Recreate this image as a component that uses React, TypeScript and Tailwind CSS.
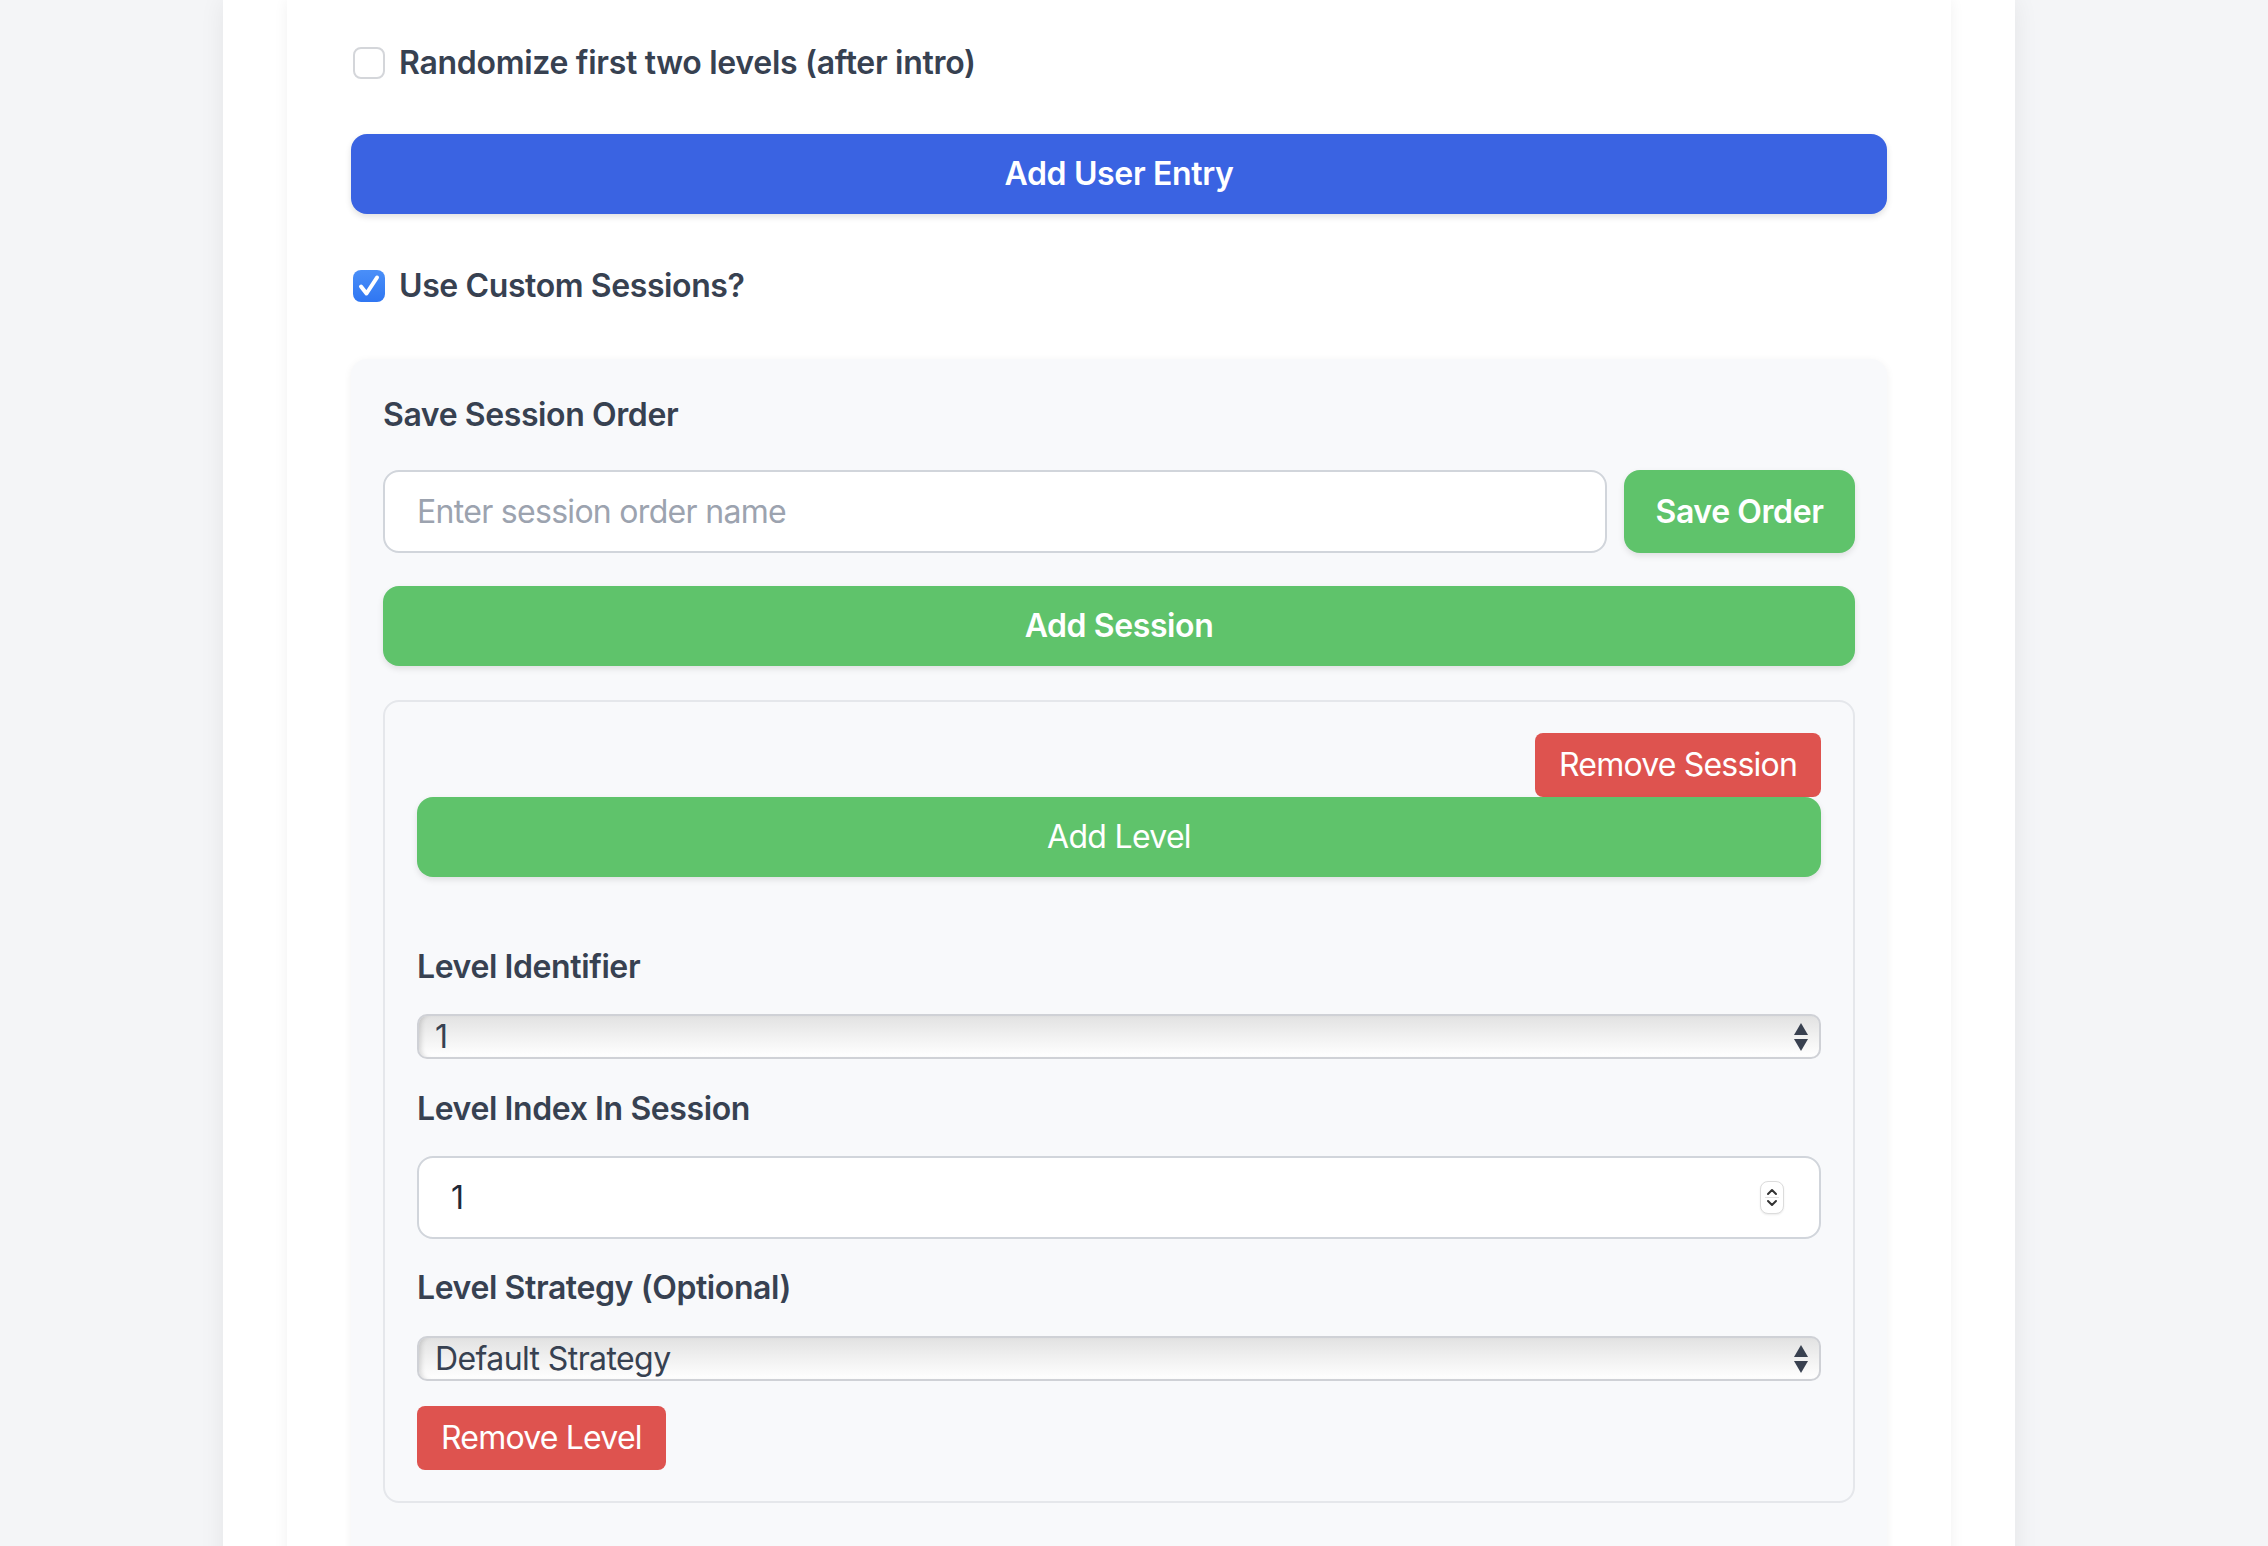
import React from 'react';

const Checkbox: React.FC<{ checked?: boolean }> = ({ checked }) =>
  checked ? (
    <span className="ml-[2px] flex h-[32px] w-[32px] shrink-0 items-center justify-center rounded-[8px] bg-linear-to-b from-[#4a8ff8] to-[#2f76f2]">
      <svg width="26" height="26" viewBox="0 0 26 26" fill="none">
        <path d="M5 13.5 L10.5 20.5 L21 4.5" stroke="white" strokeWidth="4" strokeLinecap="round" strokeLinejoin="round" />
      </svg>
    </span>
  ) : (
    <span className="ml-[2px] h-[32px] w-[32px] shrink-0 rounded-[8px] border-2 border-[#d4d6da] bg-white" />
  );

const SelectBox: React.FC<{ value: string }> = ({ value }) => (
  <div className="relative h-[45px]">
    <select
      defaultValue={value}
      className="h-full w-full appearance-none rounded-[10px] border-2 border-[#cfd1d6] bg-linear-to-b from-[#e2e2e2] via-[#f1f1f1] to-white pl-[16px] text-[32px] leading-[41px] tracking-[-0.6px] text-[#374151] shadow-[inset_5px_0_5px_-3px_rgba(0,0,0,0.15)] outline-none"
    >
      <option>{value}</option>
    </select>
    <svg className="pointer-events-none absolute top-[9px] right-[13px]" width="14" height="28" viewBox="0 0 14 28">
      <path d="M7 0 L14 12 L0 12 Z" fill="#394150" />
      <path d="M0 16 L14 16 L7 28 Z" fill="#394150" />
    </svg>
  </div>
);

const App: React.FC = () => {
  return (
    <div className="min-h-screen bg-[#f4f5f7] font-['Inter',sans-serif] text-[#374151]">
      <div className="ml-[223px] w-[1792px] bg-white px-16 shadow-[0_0_24px_rgba(0,0,0,0.07)]">
        <div className="bg-white px-16 pt-[39px] pb-[120px] shadow-[0_0_14px_rgba(0,0,0,0.06)]">
          <label className="flex h-[48px] items-center gap-[14px]">
            <Checkbox />
            <span className="text-[32px] font-semibold leading-[48px] tracking-[-0.3px]">Randomize first two levels (after intro)</span>
          </label>

          <button className="mt-[47px] h-[80px] w-full rounded-[16px] bg-[#3a63e2] text-[32px] font-semibold tracking-[-0.35px] text-white shadow-[0_3px_6px_rgba(0,0,0,0.12)]">
            Add User Entry
          </button>

          <label className="mt-[48px] flex h-[48px] items-center gap-[14px]">
            <Checkbox checked />
            <span className="text-[32px] font-semibold leading-[48px] tracking-[-0.4px]">Use Custom Sessions?</span>
          </label>

          <div className="mt-[49px] rounded-[16px] bg-[#f8f9fb] p-8 pb-[80px] shadow-[0_2px_8px_rgba(0,0,0,0.06)]">
            <h3 className="h-[48px] text-[32px] font-semibold leading-[48px] tracking-[-0.4px]">Save Session Order</h3>

            <div className="mt-[31px] flex gap-[17px]">
              <input
                className="h-[83px] flex-1 rounded-[16px] border-2 border-[#d1d5db] bg-white px-[32px] text-[32px] tracking-[-0.7px] outline-none placeholder:text-[#9ca3af]"
                placeholder="Enter session order name"
              />
              <button className="h-[83px] w-[231px] rounded-[16px] bg-[#5fc36b] text-[32px] font-semibold tracking-[-0.4px] text-white shadow-[0_3px_6px_rgba(0,0,0,0.1)]">
                Save Order
              </button>
            </div>

            <button className="mt-[33px] h-[80px] w-full rounded-[16px] bg-[#5fc36b] text-[32px] font-semibold tracking-[-0.4px] text-white shadow-[0_3px_6px_rgba(0,0,0,0.1)]">
              Add Session
            </button>

            <div className="mt-[34px] rounded-[16px] border-2 border-[#e5e7eb] px-[32px] pt-[31px] pb-[31px]">
              <div className="flex justify-end">
                <button className="h-[64px] rounded-[8px] bg-[#de534f] px-[24px] text-[32px] tracking-[-0.8px] text-white">Remove Session</button>
              </div>
              <button className="h-[80px] w-full rounded-[16px] bg-[#5fc36b] text-[32px] tracking-[-0.7px] text-white shadow-[0_3px_6px_rgba(0,0,0,0.1)]">
                Add Level
              </button>

              <div className="mt-[66px] h-[48px] text-[32px] font-semibold leading-[48px] tracking-[-0.4px]">Level Identifier</div>
              <div className="mt-[23px]">
                <SelectBox value="1" />
              </div>

              <div className="mt-[26px] h-[48px] text-[32px] font-semibold leading-[48px] tracking-[-0.4px]">Level Index In Session</div>
              <div className="relative mt-[23px] h-[83px]">
                <input
                  defaultValue="1"
                  className="h-full w-full rounded-[16px] border-2 border-[#d1d5db] bg-white px-[32px] text-[32px] text-[#1f2937] outline-none"
                />
                <div className="pointer-events-none absolute top-[25px] right-[37px] flex h-[33px] w-[24px] flex-col items-center justify-center rounded-[8px] border border-[#dcdcdc] bg-white shadow-[0_1px_2px_rgba(0,0,0,0.08)]">
                  <svg width="14" height="27" viewBox="0 0 14 27" fill="none">
                    <path d="M3 10 L7 6 L11 10" stroke="#333" strokeWidth="2" strokeLinecap="round" strokeLinejoin="round" />
                    <line x1="0" y1="13.5" x2="14" y2="13.5" stroke="#e2e2e2" strokeWidth="1" />
                    <path d="M3 17 L7 21 L11 17" stroke="#333" strokeWidth="2" strokeLinecap="round" strokeLinejoin="round" />
                  </svg>
                </div>
              </div>

              <div className="mt-[25px] h-[48px] text-[32px] font-semibold leading-[48px] tracking-[-0.4px]">Level Strategy (Optional)</div>
              <div className="mt-[24px]">
                <SelectBox value="Default Strategy" />
              </div>

              <button className="mt-[25px] h-[64px] rounded-[8px] bg-[#de534f] px-[24px] text-[32px] tracking-[-0.8px] text-white">Remove Level</button>
            </div>
          </div>
        </div>
      </div>
    </div>
  );
};

export default App;
